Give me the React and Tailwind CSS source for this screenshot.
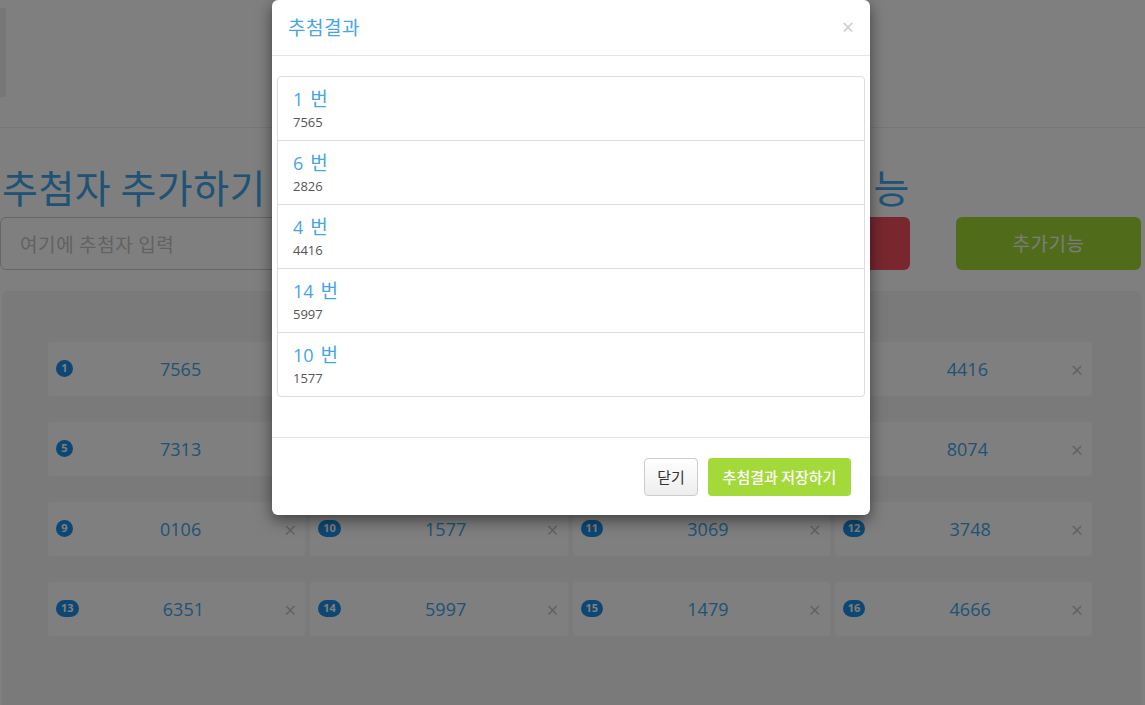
import React from "react";

const font = { fontFamily: '"Open Sans", "Noto Sans CJK KR", sans-serif' };
const ko = { fontFamily: '"Noto Sans CJK KR", "Open Sans", sans-serif' };

const entries = [
  ["1", "7565"], ["2", "2826"], ["3", "1045"], ["4", "4416"],
  ["5", "7313"], ["6", "2826"], ["7", "3304"], ["8", "8074"],
  ["9", "0106"], ["10", "1577"], ["11", "3069"], ["12", "3748"],
  ["13", "6351"], ["14", "5997"], ["15", "1479"], ["16", "4666"],
];

const winners = [
  ["1", "7565"],
  ["6", "2826"],
  ["4", "4416"],
  ["14", "5997"],
  ["10", "1577"],
];

function EntryCard({ no, value }) {
  return (
    <div className="flex h-[56px] items-center rounded-sm border border-[#f6f6f6] bg-white pl-[8px] pr-[9px]">
      <span className="-mt-[1px] flex h-[17px] min-w-[17px] items-center justify-center rounded-full bg-[#1a8ee6] px-[5px] text-[11px] font-bold text-white">
        {no}
      </span>
      <span className="flex-1 pl-[4px] text-center text-[18px] text-[#3fa6ea]">{value}</span>
      <span className="mt-[3px] text-[21px] leading-none text-[#c4c4c4]">×</span>
    </div>
  );
}

export default function App() {
  return (
    <div className="relative h-[705px] w-[1145px] overflow-hidden bg-white" style={font}>
      {/* page behind the dialog */}
      <div className="pt-[8px]">
        <div className="h-[89px] w-[6px] bg-[#eeeeee]" />
        <div className="mt-[30px] h-px w-full bg-[#eeeeee]" />

        <div className="mt-[35px] flex">
          <div className="w-[560px]">
            <h1 className="pl-[2px] text-[39px] leading-[46px] tracking-[0.5px] text-[#3fa6ea]" style={ko}>
              추첨자 추가하기
            </h1>
            <input
              className="mt-[8px] h-[53px] w-full rounded-md border border-[#cccccc] px-[19px] text-[19px] tracking-[0.6px] placeholder:text-[#c4c4c4]"
              style={ko}
              placeholder="여기에 추첨자 입력"
            />
          </div>
          <div className="flex w-[350px] flex-col items-end">
            <h1 className="text-[39px] leading-[46px] tracking-[0.5px] text-[#3fa6ea]" style={ko}>
              추가기능
            </h1>
            <button className="mt-[8px] h-[53px] w-[130px] rounded-md bg-[#f04e5c] text-[18px] text-white" style={ko}>
              추첨
            </button>
          </div>
          <div className="ml-[46px] flex w-[185px] flex-col justify-end">
            <button className="h-[53px] w-full rounded-md bg-[#a0d834] text-[19px] tracking-[0.5px] text-[#f8f8f8]" style={ko}>
              추가기능
            </button>
          </div>
        </div>

        <div className="ml-[2px] mt-[21px] h-[460px] w-[1139px] rounded-md bg-[#f4f4f4] pl-[45px] pt-[50px]">
          <div className="grid w-[1046px] grid-cols-4 gap-x-[3px] gap-y-[24px]">
            {entries.map(([no, value]) => (
              <EntryCard key={no} no={no} value={value} />
            ))}
          </div>
        </div>
      </div>

      {/* backdrop */}
      <div className="absolute inset-0 bg-black/50" />

      {/* dialog */}
      <div className="absolute left-[272px] top-0 w-[598px] rounded-md bg-white shadow-[0_5px_15px_rgba(0,0,0,0.5)]">
        <div className="flex h-[56px] items-center justify-between border-b border-[#e5e5e5] pl-[16px] pr-[16px]">
          <span className="text-[19px] tracking-[0.5px] text-[#46a6e4]" style={ko}>
            추첨결과
          </span>
          <span className="text-[21px] leading-none text-[#cccccc]">×</span>
        </div>

        <div className="px-[5px] pb-[40px] pt-[20px]">
          <div className="rounded-[4px] border border-[#dddddd]">
            {winners.map(([no, value], i) => (
              <div
                key={no}
                className={`pl-[15px] pt-[9px] ${i > 0 ? "h-[64px] border-t border-[#dddddd]" : "h-[63px]"}`}
              >
                <div className="text-[18px] leading-[24px] text-[#46a6e4]">
                  {no}
                  <span className="ml-[7px] text-[19px]" style={ko}>
                    번
                  </span>
                </div>
                <div className="mt-[2px] text-[13px] leading-[18px] text-[#555555]">{value}</div>
              </div>
            ))}
          </div>
        </div>

        <div className="flex justify-end gap-[10px] border-t border-[#e5e5e5] pb-[19px] pr-[19px] pt-[20px]">
          <button
            className="h-[38px] w-[54px] rounded-[4px] border border-[#cccccc] bg-gradient-to-b from-white to-[#ededed] text-[15px] text-[#333333]"
            style={ko}
          >
            닫기
          </button>
          <button
            className="h-[38px] w-[143px] rounded-[4px] bg-[#a3d939] text-[15px] font-medium text-white"
            style={ko}
          >
            추첨결과 저장하기
          </button>
        </div>
      </div>
    </div>
  );
}
